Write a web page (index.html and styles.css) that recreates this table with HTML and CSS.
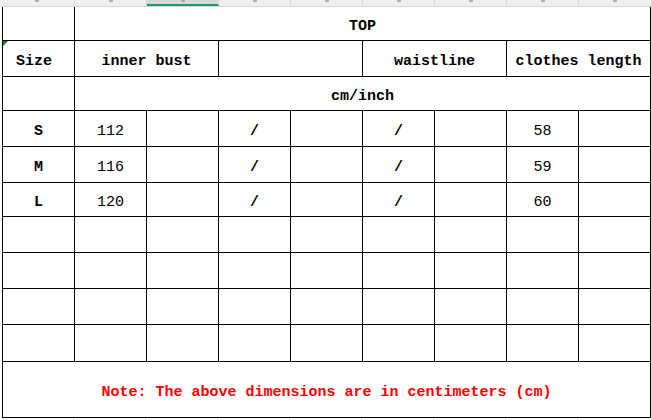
FILE: index.html
```html
<!DOCTYPE html>
<html>
<head>
<meta charset="utf-8">
<link rel="stylesheet" href="styles.css">
</head>
<body>
<div class="colhead">
  <div class="ch first"><i class="mk"></i></div>
  <div class="ch"><i class="mk"></i></div>
  <div class="ch sel"><i class="mk"></i></div>
  <div class="ch"><i class="mk"></i></div>
  <div class="ch"><i class="mk"></i></div>
  <div class="ch"><i class="mk"></i></div>
  <div class="ch"><i class="mk"></i></div>
  <div class="ch"><i class="mk"></i></div>
  <div class="ch last"><i class="mk"></i></div>
</div>
<div class="sheet">
  <div class="c"></div>
  <div class="c s8 b">TOP</div>

  <div class="c b"><span class="pre">Size </span><i class="tri"></i></div>
  <div class="c s2 b">inner bust</div>
  <div class="c s2"></div>
  <div class="c s2 b">waistline</div>
  <div class="c s2 b">clothes length</div>

  <div class="c"></div>
  <div class="c s8 b">cm/inch</div>

  <div class="c b">S</div><div class="c n">112</div><div class="c"></div><div class="c b">/</div><div class="c"></div><div class="c b">/</div><div class="c"></div><div class="c n">58</div><div class="c"></div>
  <div class="c b">M</div><div class="c n">116</div><div class="c"></div><div class="c b">/</div><div class="c"></div><div class="c b">/</div><div class="c"></div><div class="c n">59</div><div class="c"></div>
  <div class="c b">L</div><div class="c n">120</div><div class="c"></div><div class="c b">/</div><div class="c"></div><div class="c b">/</div><div class="c"></div><div class="c n">60</div><div class="c"></div>

  <div class="c"></div><div class="c"></div><div class="c"></div><div class="c"></div><div class="c"></div><div class="c"></div><div class="c"></div><div class="c"></div><div class="c"></div>
  <div class="c"></div><div class="c"></div><div class="c"></div><div class="c"></div><div class="c"></div><div class="c"></div><div class="c"></div><div class="c"></div><div class="c"></div>
  <div class="c"></div><div class="c"></div><div class="c"></div><div class="c"></div><div class="c"></div><div class="c"></div><div class="c"></div><div class="c"></div><div class="c"></div>
  <div class="c"></div><div class="c"></div><div class="c"></div><div class="c"></div><div class="c"></div><div class="c"></div><div class="c"></div><div class="c"></div><div class="c"></div>

  <div class="c s9 b note">Note: The above dimensions are in centimeters (cm)</div>
</div>
<div class="below">
  <div class="g first"></div><div class="g"></div><div class="g"></div><div class="g"></div><div class="g"></div><div class="g"></div><div class="g"></div><div class="g"></div><div class="g"></div>
</div>
</body>
</html>
```
FILE: styles.css
```css
* { box-sizing: border-box; }
html, body { margin: 0; padding: 0; background: #fff; }
body { width: 651px; height: 420px; overflow: hidden; font-family: "Liberation Mono", "DejaVu Sans Mono", monospace; }

.colhead {
  display: flex;
  height: 7px;
  background: #efefef;
  border-bottom: 1px solid #d6d6d6;
  overflow: hidden;
}
.ch {
  width: 72px;
  flex: none;
  border-right: 1px solid #d6d6d6;
  display: flex;
  justify-content: center;
  align-items: flex-start;
}
.ch.first { width: 75px; }
.ch.last { border-right: none; }
.ch.sel { background: #d9d9d9; border-bottom: 2px solid #1d9a6c; }
.mk {
  width: 4px;
  height: 2px;
  background: linear-gradient(90deg, #c9a07a 0 1px, #8aa0c8 1px 3px, #a0a0a0 3px);
  opacity: 0.8;
}

.sheet {
  margin-left: 2px;
  width: 649px;
  border-left: 1px solid #000;
  display: grid;
  grid-template-columns: repeat(9, 72px);
  grid-template-rows: 34px 36px 34px 36px 36px 34px 36px 36px 36px 37px 56px;
}
.c {
  border-right: 1px solid #000;
  border-bottom: 1px solid #000;
  display: flex;
  align-items: center;
  justify-content: center;
  padding-top: 6px;
  font-size: 15px;
  color: #000;
  white-space: pre;
  position: relative;
}
.s2 { grid-column: span 2; }
.s8 { grid-column: span 8; }
.s9 { grid-column: span 9; }
.b { font-weight: bold; }
.n { font-weight: normal; }
.note { color: #ff0000; padding-top: 6px; }
.pre { white-space: pre; }
.tri {
  position: absolute;
  left: 0;
  top: 0;
  width: 0;
  height: 0;
  border-top: 5px solid #0a7d2a;
  border-right: 5px solid transparent;
}

.below { display: flex; height: 2px; }
.g { width: 72px; flex: none; border-right: 1px solid #e0e0e0; }
.g.first { width: 74px; }
```
